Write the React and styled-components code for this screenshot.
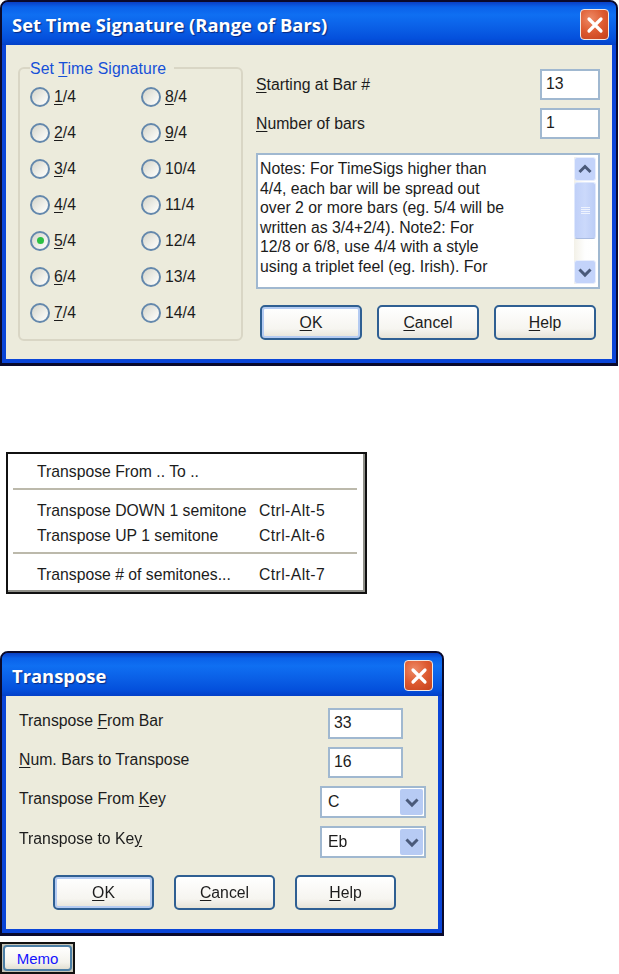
import React from 'react'
import styled, { createGlobalStyle } from 'styled-components'

const GlobalStyle = createGlobalStyle`
    html, body {
        margin: 0;
        padding: 0;
        background: #fff;
    }
`

const Page = styled.div`
    width: 619px;
    height: 974px;
    overflow: hidden;
    display: flex;
    flex-direction: column;
    align-items: flex-start;
    font-family: "Liberation Sans", Arial, sans-serif;
    font-size: 15.8px;
    color: #1c1c1c;
    filter: blur(0.35px);
`

// Window frame

const Window = styled.div`
    box-sizing: border-box;
    width: ${p => p.$width}px;
    height: ${p => p.$height}px;
    margin-top: ${p => p.$top || 0}px;
    display: flex;
    flex-direction: column;
    border: 2px solid #0a0a2c;
    border-bottom-width: 3px;
    border-radius: 8px 8px 0 0;
    background: #0a45d8;
    overflow: hidden;
`

const TitleBar = styled.div`
    height: 43px;
    flex: none;
    box-sizing: border-box;
    padding: 2px ${p => p.$right}px 0 10px;
    display: flex;
    align-items: center;
    justify-content: space-between;
    background: linear-gradient(180deg, #0a3fc4 0%, #0a62ea 12%, #0f6ff2 30%, #0a5fe6 60%, #0450dc 85%, #0340c8 100%);
`

const Title = styled.div`
    font-family: "Open Sans", "Noto Sans", sans-serif;
    font-weight: 700;
    font-size: 18.4px;
    color: #fff;
    text-shadow: 1px 1px 1px #0a2a80;
`

const CloseButton = styled.div`
    width: 29px;
    height: 31px;
    box-sizing: border-box;
    border: 1px solid #f0e8e4;
    border-radius: 4px;
    background: radial-gradient(circle at 35% 30%, #ee8a66 0%, #dd5a30 50%, #c4401c 100%);
    display: flex;
    align-items: center;
    justify-content: center;
`

const Body = styled.div`
    flex: 1;
    margin: 0 4px 4px;
    background: #ecebdc;
`

// Set Time Signature dialog

const SignatureBody = styled(Body)`
    box-sizing: border-box;
    padding: 21px 12px 0;
    display: flex;
    gap: 13px;
`

const GroupBox = styled.fieldset`
    box-sizing: border-box;
    width: 224px;
    height: 275px;
    margin: 0;
    padding: 0 0 0 10px;
    border: 2px solid #d9d6c5;
    border-radius: 6px;
`

const Legend = styled.legend`
    height: 4px;
    padding: 0 8px 0 0;
    color: #1650d8;
    line-height: 5px;
    letter-spacing: 0.1px;
`

const RadioGrid = styled.div`
    margin-top: 17px;
    display: grid;
    grid-template-columns: 111px 100px;
    grid-auto-flow: column;
    grid-template-rows: repeat(7, 19px);
    row-gap: 17px;
`

const RadioRow = styled.div`
    display: flex;
    align-items: center;
    gap: 4px;
`

const RadioDot = styled.div`
    width: 20px;
    height: 20px;
    flex: none;
    box-sizing: border-box;
    border: 2px solid #6488ac;
    border-radius: 50%;
    background: linear-gradient(135deg, #d4d4ca 0%, #f0f0ea 60%, #fff 100%);
    display: flex;
    align-items: center;
    justify-content: center;

    &::after {
        content: '';
        display: ${p => (p.$checked ? 'block' : 'none')};
        width: 7px;
        height: 7px;
        border-radius: 50%;
        background: #2cc044;
    }
`

const RightColumn = styled.div`
    width: 345px;
    display: flex;
    flex-direction: column;
`

const FieldRow = styled.div`
    height: ${p => p.$height || 31}px;
    margin-top: ${p => p.$top || 0}px;
    display: flex;
    align-items: center;
    justify-content: space-between;
`

const FieldLabel = styled.div`
    padding-bottom: ${p => p.$lift || 0}px;
`

const TextBox = styled.div`
    box-sizing: border-box;
    width: ${p => p.$width}px;
    height: 100%;
    margin-right: ${p => p.$right || 0}px;
    padding: 0 0 2px 4px;
    border: 2px solid #a0b8d0;
    background: #fff;
    display: flex;
    align-items: center;
`

const NotesBox = styled.div`
    box-sizing: border-box;
    height: 136px;
    margin-top: 14px;
    padding: 0 2px 0 2px;
    border: 2px solid #a0b8d0;
    background: #fff;
    display: flex;
    justify-content: space-between;
`

const NotesText = styled.div`
    padding-top: 4px;
    line-height: 19.6px;
    white-space: nowrap;
`

const ScrollBar = styled.div`
    width: 22px;
    height: 127px;
    margin-top: 2px;
    display: flex;
    flex-direction: column;
    background: linear-gradient(90deg, #f3f1e8 0%, #fefefe 50%, #fff 100%);
`

const ScrollButton = styled.div`
    height: 24px;
    flex: none;
    box-sizing: border-box;
    border: 1px solid #e8eefc;
    border-radius: 3px;
    background: #c3d3fa;
    display: flex;
    align-items: center;
    justify-content: center;
`

const ScrollThumb = styled.div`
    height: 57px;
    margin-top: 1px;
    flex: none;
    box-sizing: border-box;
    border: 1px solid #dfe8fc;
    border-bottom-color: #a9bbe0;
    border-radius: 3px;
    background: linear-gradient(90deg, #c0d0f8, #cbd9fb 50%, #bccdf6);
    display: flex;
    flex-direction: column;
    align-items: center;
    justify-content: center;
    gap: 1px;
`

const GripLine = styled.div`
    width: 9px;
    height: 1px;
    background: #eef3fe;
`

const ScrollGap = styled.div`
    flex: 1;
`

const ButtonRow = styled.div`
    margin-top: ${p => p.$top}px;
    padding-left: ${p => p.$indent}px;
    display: flex;
    gap: ${p => p.$gap}px;
`

const PushButton = styled.div`
    box-sizing: border-box;
    width: ${p => p.$width}px;
    height: 35px;
    border: 2px solid #2f5f92;
    border-radius: 5px;
    background: linear-gradient(180deg, #fff 0%, #f6f5f0 70%, #e6e3d8 100%);
    box-shadow: ${p => (p.$primary ? 'inset 0 0 0 2px #b4cbf2' : 'none')};
    display: flex;
    align-items: center;
    justify-content: center;
`

const Mnemonic = styled.span`
    text-decoration: underline;
    text-underline-offset: 2px;
`

// Popup menu

const Menu = styled.div`
    box-sizing: border-box;
    width: 361px;
    height: 143px;
    margin: 86px 0 0 6px;
    padding-top: 5px;
    border: 2px solid #111;
    box-shadow: inset -2px -2px 0 #8f8f88;
    background: #fff;
    font-size: 15.75px;
`

const MenuRow = styled.div`
    box-sizing: border-box;
    height: 25px;
    padding: 2px 0 0 29px;
    display: flex;
    align-items: center;
`

const MenuLabel = styled.div`
    width: 222px;
    flex: none;
`

const MenuShortcut = styled.div`
    letter-spacing: 0.4px;
`

const MenuDivider = styled.div`
    height: 2px;
    margin: 4px 8px 8px 5px;
    background: #bcb9ab;
`

// Transpose dialog

const TransposeBody = styled(Body)`
    box-sizing: border-box;
    padding: 12px 12px 0 13px;
    display: flex;
    flex-direction: column;
`

const TransposeRow = styled(FieldRow)`
    margin-bottom: 8px;
`

const SelectBox = styled(TextBox)`
    padding: 0 1px 0 6px;
    justify-content: space-between;
`

const SelectArrow = styled.div`
    width: 23px;
    height: 26px;
    border-radius: 2px;
    background: #b7cbf4;
    display: flex;
    align-items: center;
    justify-content: center;
`

// Memo button strip

const MemoStrip = styled.div`
    box-sizing: border-box;
    width: 75px;
    height: 32px;
    margin-top: 6px;
    padding: 1px;
    border: 2px solid #111;
    background: #c6c4b6;
`

const MemoButton = styled.div`
    height: 100%;
    box-sizing: border-box;
    border: 2px solid #4c7fa6;
    border-radius: 4px;
    background: linear-gradient(180deg, #fff 0%, #f4f3ec 70%, #e2dfd2 100%);
    color: #1414ff;
    font-size: 15px;
    display: flex;
    align-items: center;
    justify-content: center;
`

const Chevron = ({ up }) => (
    <svg width="16" height="16" viewBox="0 0 13 13">
        <path
            d={up ? 'M2 9 L6.5 4.5 L11 9' : 'M2 4.5 L6.5 9 L11 4.5'}
            fill="none"
            stroke="#4a5a7a"
            strokeWidth="2.4"
        />
    </svg>
)

const CloseIcon = () => (
    <svg width="18" height="18" viewBox="0 0 18 18">
        <path d="M3 3 L15 15 M15 3 L3 15" stroke="#fff" strokeWidth="3.2" strokeLinecap="round" />
    </svg>
)

const leftRadios = [
    ['1', '/4'], ['2', '/4'], ['3', '/4'], ['4', '/4'], ['5', '/4'], ['6', '/4'], ['7', '/4'],
]
const rightRadios = [
    ['8', '/4'], ['9', '/4'], ['', '10/4'], ['', '11/4'], ['', '12/4'], ['', '13/4'], ['', '14/4'],
]

const notes = [
    'Notes: For TimeSigs higher than',
    '4/4, each bar will be spread out',
    'over 2 or more bars (eg. 5/4 will be',
    'written as 3/4+2/4). Note2: For',
    '12/8 or 6/8, use 4/4 with a style',
    'using a triplet feel (eg. Irish). For',
]

const Buttons = ({ top, indent, gap, width }) => (
    <ButtonRow $top={top} $indent={indent} $gap={gap}>
        <PushButton $width={width} $primary><Mnemonic>O</Mnemonic>K</PushButton>
        <PushButton $width={width}><Mnemonic>C</Mnemonic>ancel</PushButton>
        <PushButton $width={width}><Mnemonic>H</Mnemonic>elp</PushButton>
    </ButtonRow>
)

const App = () => {
    return (
        <Page>
            <GlobalStyle />

            <Window $width={618} $height={366}>
                <TitleBar $right={7}>
                    <Title>Set Time Signature (Range of Bars)</Title>
                    <CloseButton><CloseIcon /></CloseButton>
                </TitleBar>
                <SignatureBody>
                    <GroupBox>
                        <Legend>Set <Mnemonic>T</Mnemonic>ime Signature</Legend>
                        <RadioGrid>
                            {[...leftRadios, ...rightRadios].map(([key, rest]) => (
                                <RadioRow key={key + rest}>
                                    <RadioDot $checked={key === '5'} />
                                    <div><Mnemonic>{key}</Mnemonic>{rest}</div>
                                </RadioRow>
                            ))}
                        </RadioGrid>
                    </GroupBox>
                    <RightColumn>
                        <FieldRow $top={3}>
                            <FieldLabel><Mnemonic>S</Mnemonic>tarting at Bar #</FieldLabel>
                            <TextBox $width={60}>13</TextBox>
                        </FieldRow>
                        <FieldRow $top={8}>
                            <FieldLabel><Mnemonic>N</Mnemonic>umber of bars</FieldLabel>
                            <TextBox $width={60}>1</TextBox>
                        </FieldRow>
                        <NotesBox>
                            <NotesText>
                                {notes.map(line => <div key={line}>{line}</div>)}
                            </NotesText>
                            <ScrollBar>
                                <ScrollButton><Chevron up /></ScrollButton>
                                <ScrollThumb>
                                    <GripLine /><GripLine /><GripLine /><GripLine />
                                </ScrollThumb>
                                <ScrollGap />
                                <ScrollButton><Chevron /></ScrollButton>
                            </ScrollBar>
                        </NotesBox>
                        <Buttons top={16} indent={4} gap={15} width={102} />
                    </RightColumn>
                </SignatureBody>
            </Window>

            <Menu>
                <MenuRow>Transpose From .. To ..</MenuRow>
                <MenuDivider />
                <MenuRow><MenuLabel>Transpose DOWN 1 semitone</MenuLabel><MenuShortcut>Ctrl-Alt-5</MenuShortcut></MenuRow>
                <MenuRow><MenuLabel>Transpose UP 1 semitone</MenuLabel><MenuShortcut>Ctrl-Alt-6</MenuShortcut></MenuRow>
                <MenuDivider />
                <MenuRow><MenuLabel>Transpose # of semitones...</MenuLabel><MenuShortcut>Ctrl-Alt-7</MenuShortcut></MenuRow>
            </Menu>

            <Window $width={444} $height={285} $top={57}>
                <TitleBar $right={9}>
                    <Title>Transpose</Title>
                    <CloseButton><CloseIcon /></CloseButton>
                </TitleBar>
                <TransposeBody>
                    <TransposeRow>
                        <FieldLabel $lift={6}>Transpose <Mnemonic>F</Mnemonic>rom Bar</FieldLabel>
                        <TextBox $width={75} $right={23}>33</TextBox>
                    </TransposeRow>
                    <TransposeRow>
                        <FieldLabel $lift={6}><Mnemonic>N</Mnemonic>um. Bars to Transpose</FieldLabel>
                        <TextBox $width={75} $right={23}>16</TextBox>
                    </TransposeRow>
                    <TransposeRow $height={32}>
                        <FieldLabel $lift={6}>Transpose From <Mnemonic>K</Mnemonic>ey</FieldLabel>
                        <SelectBox $width={106}>C<SelectArrow><Chevron /></SelectArrow></SelectBox>
                    </TransposeRow>
                    <TransposeRow $height={32}>
                        <FieldLabel $lift={7}>Transpose to Ke<Mnemonic>y</Mnemonic></FieldLabel>
                        <SelectBox $width={106}>Eb<SelectArrow><Chevron /></SelectArrow></SelectBox>
                    </TransposeRow>
                    <Buttons top={9} indent={34} gap={20} width={101} />
                </TransposeBody>
            </Window>

            <MemoStrip>
                <MemoButton>Memo</MemoButton>
            </MemoStrip>
        </Page>
    )
}

export default App
